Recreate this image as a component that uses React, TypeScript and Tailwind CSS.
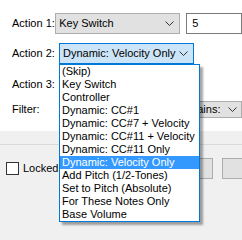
const options = [
  '(Skip)',
  'Key Switch',
  'Controller',
  'Dynamic: CC#1',
  'Dynamic: CC#7 + Velocity',
  'Dynamic: CC#11 + Velocity',
  'Dynamic: CC#11 Only',
  'Dynamic: Velocity Only',
  'Add Pitch (1/2-Tones)',
  'Set to Pitch (Absolute)',
  'For These Notes Only',
  'Base Volume',
]

function Chevron() {
  return (
    <svg width="9" height="6" viewBox="0 0 9 6" className="shrink-0">
      <path d="M0.5 0.5 L4.5 4.5 L8.5 0.5" fill="none" stroke="#333" strokeWidth="1" />
    </svg>
  )
}

export default function App() {
  const selected = 7

  return (
    <div className="relative w-[242px] h-[240px] overflow-hidden bg-[#f0f0f0] text-[11px] text-black font-['Liberation_Sans',Arial,sans-serif]">
      {/* upper white panel */}
      <div className="h-[131px] bg-white pt-[13px]">
        <div className="flex items-center h-[21px]">
          <span className="w-[59px] pl-[12px]">Action 1:</span>
          <div className="flex items-center w-[135px] h-[21px] border border-[#adadad] bg-[#e1e1e1] pl-[3px] pr-[5px]">
            <span className="flex-1">Key Switch</span>
            <Chevron />
          </div>
          <div className="ml-[6px] w-[60px] h-[21px] border border-[#7a7a7a] bg-white flex items-center pl-[5px]">5</div>
        </div>

        <div className="flex items-center h-[21px] mt-[9px]">
          <span className="w-[59px] pl-[12px]">Action 2:</span>
          <div className="flex items-center w-[135px] h-[21px] border border-[#0078d7] bg-[#cce4f7] pl-[3px] pr-[5px]">
            <span className="flex-1">Dynamic: Velocity Only</span>
            <Chevron />
          </div>
        </div>

        <div className="flex items-center h-[21px] mt-[10px]">
          <span className="w-[59px] pl-[12px]">Action 3:</span>
        </div>

        <div className="flex items-center h-[17px] mt-[6px]">
          <span className="w-[59px] pl-[12px]">Filter:</span>
          <div className="ml-auto flex items-center w-[72px] h-[17px] border border-[#adadad] bg-[#e1e1e1] pl-[3px] pr-[4px]">
            <span className="flex-1">Contains:</span>
            <Chevron />
          </div>
        </div>
      </div>

      {/* lower gray panel */}
      <div className="h-[14px] border-b border-[#dadada]" />
      <div className="flex items-center h-[21px] mt-[13px]">
        <div className="ml-[6px] w-[13px] h-[13px] border border-[#333] bg-white" />
        <span className="ml-[4px]">Locked</span>
        <div className="ml-auto flex items-center justify-center w-[75px] h-[21px] border border-[#adadad] bg-[#e1e1e1]">
          Delete
        </div>
        <div className="ml-[9px] -mr-[20px] w-[40px] h-[21px] border border-[#adadad] bg-[#e1e1e1]" />
      </div>

      {/* open dropdown list */}
      <div className="absolute left-[59px] top-[64px] w-[141px] border border-[#0078d7] bg-white shadow-[3px_3px_2px_rgba(0,0,0,0.35)]">
        {options.map((o, i) => (
          <div
            key={o}
            className={
              i === selected
                ? 'h-[13px] leading-[13px] pl-[2px] bg-[#3399ff] text-white whitespace-nowrap'
                : 'h-[13px] leading-[13px] pl-[2px] whitespace-nowrap'
            }
          >
            {o}
          </div>
        ))}
      </div>
    </div>
  )
}
